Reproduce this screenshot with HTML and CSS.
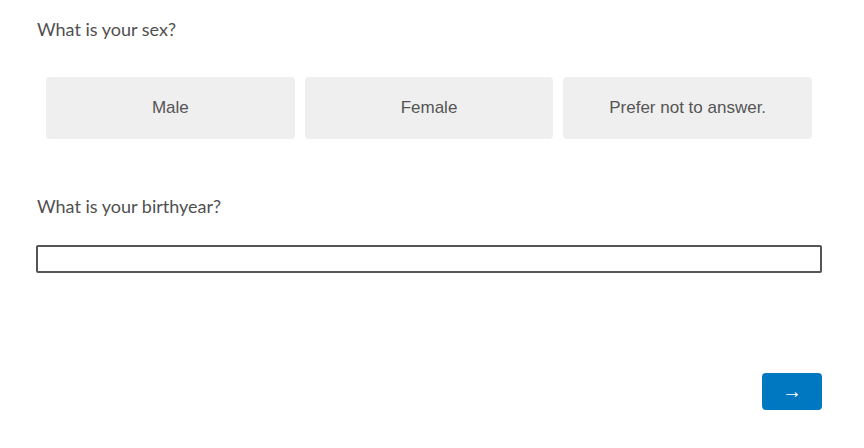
FILE: index.html
```html
<!DOCTYPE html>
<html lang="en">
<head>
  <meta charset="UTF-8">
  <title>Survey</title>
  <link rel="stylesheet" href="styles.css">
</head>
<body>
  <div class="survey">
    <div class="question">
      <p class="label">What is your sex?</p>
      <div class="choices">
        <button class="choice">Male</button>
        <button class="choice">Female</button>
        <button class="choice">Prefer not to answer.</button>
      </div>
    </div>

    <div class="question">
      <p class="label">What is your birthyear?</p>
      <input type="text" class="answer">
    </div>

    <div class="nav">
      <button class="next">&rarr;</button>
    </div>
  </div>
</body>
</html>
```

FILE: styles.css
```css
body {
  margin: 0;
  background: #fff;
  font-family: Lato, "Liberation Sans", sans-serif;
  color: #555;
}

.survey {
  width: 786px;
  padding: 16px 0 0 36px;
}

.label {
  margin: 0;
  font-size: 18px;
  line-height: 26px;
  color: #505050;
  padding-left: 1px;
}

.choices {
  display: flex;
  gap: 10px;
  padding: 35px 10px 0;
  margin-bottom: 54px;
}

.choice {
  flex: 1;
  height: 62px;
  border: none;
  border-radius: 4px;
  background: #efefef;
  font-family: "Liberation Sans", Arial, sans-serif;
  font-size: 17px;
  color: #555;
  cursor: pointer;
}

.answer {
  display: block;
  box-sizing: border-box;
  width: 786px;
  height: 28px;
  margin-top: 26px;
  border: 2px solid #555;
  border-radius: 2px;
  font-size: 16px;
}

.nav {
  display: flex;
  justify-content: flex-end;
  margin-top: 100px;
}

.next {
  width: 60px;
  height: 37px;
  border: none;
  border-radius: 4px;
  background: #0077c1;
  color: #fff;
  font-family: "Liberation Sans", sans-serif;
  font-size: 20px;
  cursor: pointer;
}
```
